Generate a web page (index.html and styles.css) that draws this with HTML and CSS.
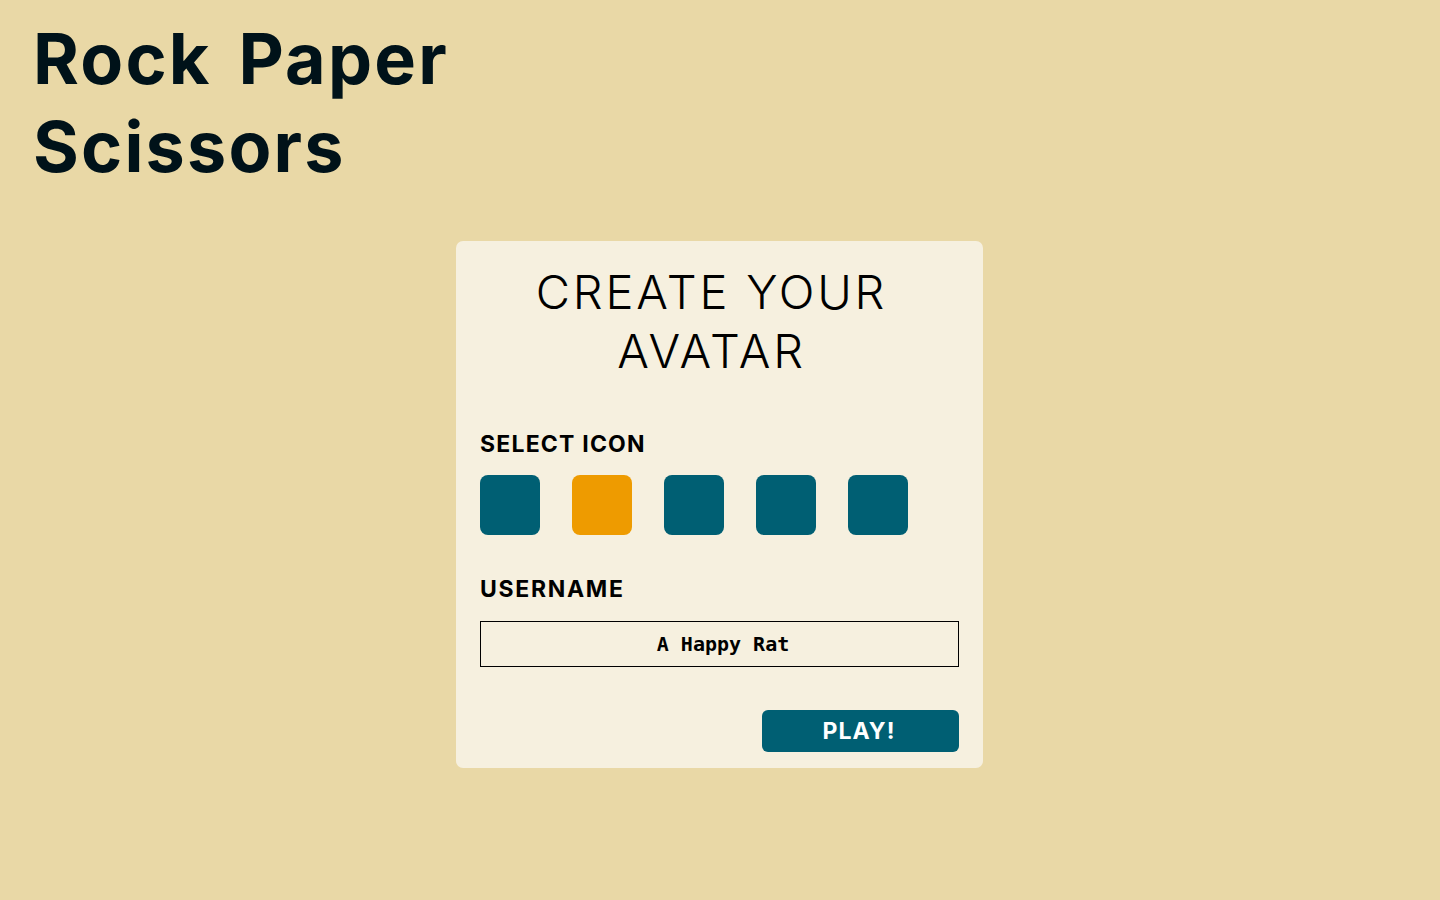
FILE: index.html
```html
<!DOCTYPE html>
<html lang="en">
<head>
<meta charset="utf-8">
<title>Rock Paper Scissors</title>
<link rel="stylesheet" href="styles.css">
</head>
<body>
<header class="site-header">
  <h1 class="site-title">Rock Paper<br>Scissors</h1>
</header>
<main class="main">
  <section class="card">
    <h2 class="card-title">CREATE YOUR<br>AVATAR</h2>
    <h3 class="label label-icon">SELECT ICON</h3>
    <div class="icons">
      <button class="icon"></button>
      <button class="icon icon-selected"></button>
      <button class="icon"></button>
      <button class="icon"></button>
      <button class="icon"></button>
    </div>
    <h3 class="label label-user">USERNAME</h3>
    <input class="username" type="text" value="A Happy Rat">
    <div class="actions">
      <button class="play">PLAY!</button>
    </div>
  </section>
</main>
</body>
</html>
```
FILE: styles.css
```css
* { box-sizing: border-box; }
html, body { margin: 0; padding: 0; }
body {
  background: #E9D8A6;
  font-family: Inter, "Open Sans", sans-serif;
  color: #000;
  min-height: 900px;
}
.site-header {
  padding: 15px 33px 0;
}
.site-title {
  margin: 0;
  font-size: 70px;
  line-height: 88px;
  font-weight: 700;
  color: #001219;
  letter-spacing: 2.2px;
  word-spacing: 8px;
}
.main {
  display: flex;
  justify-content: center;
  padding-top: 50px;
  padding-right: 1px;
}
.card {
  width: 527px;
  background: #F6F0DF;
  border-radius: 7px;
  padding: 21px 24px 16px;
  display: flex;
  flex-direction: column;
}
.card-title {
  margin: 0;
  font-size: 47px;
  line-height: 59px;
  font-weight: 300;
  text-align: center;
  padding-right: 16px;
  letter-spacing: 2.8px;
}
.label {
  margin: 0;
  font-size: 23px;
  line-height: 28px;
  font-weight: 700;
}
.label-icon { margin-top: 50px; letter-spacing: 1.2px; }
.label-user { margin-top: 40px; letter-spacing: 1.7px; }
.icons {
  display: flex;
  gap: 32px;
  margin-top: 17px;
}
.icon {
  width: 60px;
  height: 60px;
  border: none;
  padding: 0;
  border-radius: 8px;
  background: #005F73;
}
.icon-selected { background: #EE9B00; }
.username {
  margin-top: 18px;
  width: 100%;
  height: 46px;
  border: 1px solid #000;
  background: transparent;
  font-family: "DejaVu Sans Mono", "Liberation Mono", monospace;
  font-weight: 700;
  font-size: 20px;
  text-align: center;
  padding: 0 0 0 7px;
  color: #000;
}
.actions {
  display: flex;
  justify-content: flex-end;
  margin-top: 43px;
}
.play {
  width: 197px;
  height: 42px;
  border: none;
  border-radius: 6px;
  background: #005F73;
  color: #fff;
  font-family: Inter, "Open Sans", sans-serif;
  font-weight: 700;
  font-size: 23px;
  letter-spacing: 1px;
  padding: 0 3px 0 0;
}
```
